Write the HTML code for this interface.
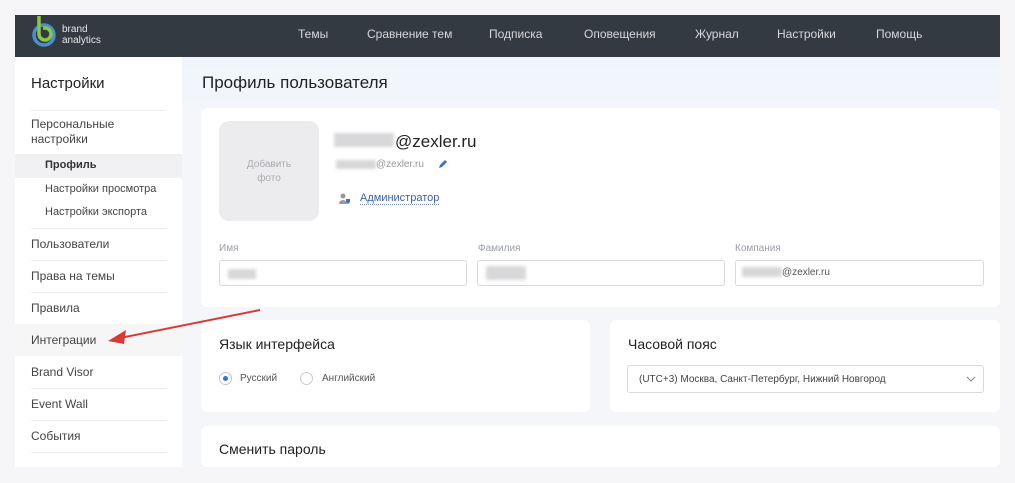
<!DOCTYPE html>
<html><head><meta charset="utf-8"><style>
*{margin:0;padding:0;box-sizing:border-box}
body{width:1015px;height:483px;background:#f6f6f8;font-family:"Liberation Sans",sans-serif;position:relative;overflow:hidden;color:#2b2f36}
.a{position:absolute}
.hdr{left:15px;top:15px;width:985px;height:42px;background:#343a42}
.nav{top:27px;font-size:12px;color:#d5d8dc}
.side{left:15px;top:57px;width:167px;height:410px;background:#fff}
.main{left:182px;top:57px;width:818px;height:410px;background:linear-gradient(#f0f5fd,#f5f6f9 80px)}
.si{left:31px;font-size:12px;color:#444}
.sub{left:45px;font-size:11px;color:#444}
.ln{left:31px;width:135px;height:1px;background:#eceef1}
.card{background:#fff;border-radius:6px}
.lbl{font-size:10px;color:#9a9ea5;top:243px}
.inp{top:260px;height:26px;border:1px solid #d6d9de;border-radius:3px;background:#fff}
.blur{background:#d8d8da;filter:blur(1.5px)}
h2{font-weight:normal;font-size:14px;color:#222}
</style></head><body>
<div class="a hdr"></div>
<svg class="a" style="left:30px;top:15px" width="30" height="34" viewBox="0 0 30 34"><circle cx="14" cy="20" r="10" fill="none" stroke="#4a8fd0" stroke-width="3.5"/><path d="M9 1v18a6 6 0 1 0 6-6h-2" fill="none" stroke="#8dc63f" stroke-width="3.5"/></svg>
<div class="a" style="left:62px;top:24px;font-size:10px;line-height:11px;color:#e6e8ea">brand<br>analytics</div>
<div class="a nav" style="left:298px">Темы</div>
<div class="a nav" style="left:367px">Сравнение тем</div>
<div class="a nav" style="left:489px">Подписка</div>
<div class="a nav" style="left:584px">Оповещения</div>
<div class="a nav" style="left:695px">Журнал</div>
<div class="a nav" style="left:777px">Настройки</div>
<div class="a nav" style="left:876px">Помощь</div>
<div class="a side"></div>
<div class="a main"></div>
<div class="a" style="left:31px;top:75px;font-size:15px;color:#222">Настройки</div>
<div class="a ln" style="top:110px"></div>
<div class="a si" style="top:117px;line-height:15px">Персональные<br>настройки</div>
<div class="a" style="left:15px;top:154px;width:167px;height:24px;background:#f1f1f3"></div>
<div class="a sub" style="top:159px;font-weight:bold;color:#333">Профиль</div>
<div class="a sub" style="top:183px">Настройки просмотра</div>
<div class="a sub" style="top:206px">Настройки экспорта</div>
<div class="a ln" style="top:228px"></div>
<div class="a si" style="top:237px">Пользователи</div>
<div class="a ln" style="top:260px"></div>
<div class="a si" style="top:269px">Права на темы</div>
<div class="a ln" style="top:292px"></div>
<div class="a si" style="top:301px">Правила</div>
<div class="a" style="left:15px;top:324px;width:167px;height:32px;background:#f6f6f7"></div>
<div class="a si" style="top:333px">Интеграции</div>
<div class="a si" style="top:365px">Brand Visor</div>
<div class="a ln" style="top:388px"></div>
<div class="a si" style="top:397px">Event Wall</div>
<div class="a ln" style="top:420px"></div>
<div class="a si" style="top:429px">События</div>
<div class="a ln" style="top:452px"></div>
<div class="a" style="left:202px;top:73px;font-size:17px;color:#222">Профиль пользователя</div>
<div class="a card" style="left:201px;top:108px;width:799px;height:199px"></div>
<div class="a" style="left:219px;top:121px;width:100px;height:100px;background:#ececee;border-radius:10px;font-size:10px;color:#a8abb0;text-align:center;padding-top:37px;line-height:14px">Добавить<br>фото</div>
<div class="a blur" style="left:334px;top:133px;width:60px;height:14px"></div>
<div class="a" style="left:395px;top:132px;font-size:17px;color:#222">@zexler.ru</div>
<div class="a blur" style="left:336px;top:160px;width:40px;height:9px"></div>
<div class="a" style="left:376px;top:159px;font-size:10px;color:#999">@zexler.ru</div>
<svg class="a" style="left:437px;top:158px" width="12" height="12"><path d="M2 10l1-3 5-5 2 2-5 5z" fill="#3b6fd0"/></svg>
<svg class="a" style="left:339px;top:193px" width="12" height="12"><circle cx="4" cy="3" r="2.5" fill="#999"/><path d="M0 11a4 4 0 0 1 8 0z" fill="#999"/><path d="M7 6h4v3l-2 2-2-2z" fill="#3b6fd0"/></svg>
<div class="a" style="left:360px;top:192px;font-size:11px;color:#3a5fb0;border-bottom:1px dotted #7b8fc0">Администратор</div>
<div class="a lbl" style="left:219px">Имя</div>
<div class="a lbl" style="left:478px">Фамилия</div>
<div class="a lbl" style="left:735px">Компания</div>
<div class="a inp" style="left:219px;width:248px"><div class="a blur" style="left:8px;top:8px;width:28px;height:10px"></div></div>
<div class="a inp" style="left:477px;width:248px"><div class="a blur" style="left:8px;top:5px;width:40px;height:14px"></div></div>
<div class="a inp" style="left:735px;width:249px"><div class="a blur" style="left:6px;top:6px;width:40px;height:10px"></div><div class="a" style="left:46px;top:6px;font-size:10px;color:#555">@zexler.ru</div></div>
<div class="a card" style="left:201px;top:320px;width:389px;height:92px"></div>
<h2 class="a" style="left:219px;top:336px">Язык интерфейса</h2>
<div class="a" style="left:219px;top:372px;width:13px;height:13px;border:1px solid #b8c4e0;border-radius:50%"><div class="a" style="left:3px;top:3px;width:5px;height:5px;border-radius:50%;background:#3b6fd0"></div></div>
<div class="a" style="left:240px;top:373px;font-size:10px;color:#555">Русский</div>
<div class="a" style="left:300px;top:372px;width:13px;height:13px;border:1px solid #ccc;border-radius:50%"></div>
<div class="a" style="left:322px;top:373px;font-size:10px;color:#555">Английский</div>
<div class="a card" style="left:610px;top:320px;width:390px;height:92px"></div>
<h2 class="a" style="left:628px;top:336px">Часовой пояс</h2>
<div class="a" style="left:627px;top:365px;width:357px;height:28px;border:1px solid #d6d9de;border-radius:3px;background:#fff"></div>
<div class="a" style="left:639px;top:374px;font-size:10px;color:#444">(UTC+3) Москва, Санкт-Петербург, Нижний Новгород</div>
<svg class="a" style="left:966px;top:376px" width="10" height="6"><path d="M1 1l4 4 4-4" fill="none" stroke="#888"/></svg>
<div class="a card" style="left:201px;top:426px;width:799px;height:41px"></div>
<h2 class="a" style="left:219px;top:441px">Сменить пароль</h2>
<svg class="a" style="left:100px;top:300px" width="170" height="50"><path d="M160 10L20 38" stroke="#d93a34" stroke-width="2"/><path d="M8 41L26 30L24 44z" fill="#d93a34"/></svg>
</body></html>
